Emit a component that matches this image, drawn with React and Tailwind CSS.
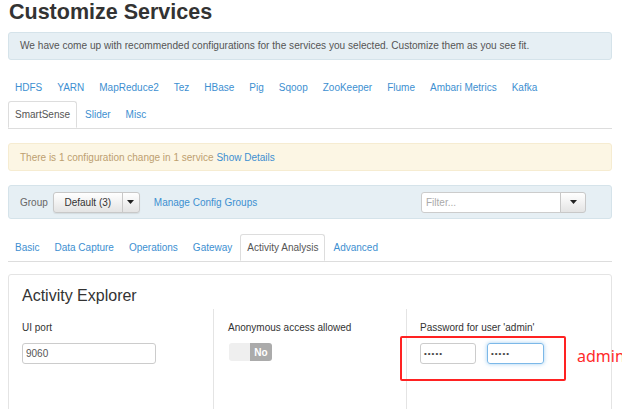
import React from 'react';

const services = ['HDFS', 'YARN', 'MapReduce2', 'Tez', 'HBase', 'Pig', 'Sqoop', 'ZooKeeper', 'Flume', 'Ambari Metrics', 'Kafka', 'SmartSense', 'Slider', 'Misc'];
const subTabs = ['Basic', 'Data Capture', 'Operations', 'Gateway', 'Activity Analysis', 'Advanced'];

const Caret = () => (
  <svg width="7" height="4" viewBox="0 0 7 4">
    <polygon points="0,0 7,0 3.5,4" fill="#222" />
  </svg>
);

const Tab = ({ label, active }) => (
  <div
    className={
      active
        ? 'h-[27px] px-[6px] mr-[1px] -mb-px flex items-center bg-white border border-[#ddd] border-b-white rounded-t-[3px] text-[#555]'
        : 'h-[27px] px-[6px] mr-[1px] flex items-center border border-transparent text-[#3d8fd1]'
    }
  >
    {label}
  </div>
);

const App = () => {
  return (
    <div className="w-[622px] h-[409px] overflow-hidden bg-white relative text-[10px] text-[#333]" style={{ fontFamily: '"Liberation Sans", Arial, sans-serif' }}>
      <div className="pl-[8px] pr-[10px]">
        {/* Title */}
        <h1 className="text-[21.5px] leading-[24px] font-bold text-[#333] pl-[1px]">Customize Services</h1>

        {/* Info alert */}
        <div className="mt-[8px] h-[28px] flex items-center px-[11px] bg-[#e6eff4] border border-[#d5e3ea] rounded-[3px] text-[#555] text-[10.1px]">
          We have come up with recommended configurations for the services you selected. Customize them as you see fit.
        </div>

        {/* Service tabs */}
        <div className="mt-[14px] flex flex-wrap border-b border-[#ddd]">
          {services.map((s) => (
            <Tab key={s} label={s} active={s === 'SmartSense'} />
          ))}
        </div>

        {/* Warning alert */}
        <div className="mt-[14px] h-[28px] flex items-center px-[11px] bg-[#fcf6e4] border border-[#f6ecd1] rounded-[3px] text-[#bd9f70]">
          <span>There is 1 configuration change in 1 service</span>
          <span className="ml-[3px] text-[#3d8fd1]">Show Details</span>
        </div>

        {/* Group bar */}
        <div className="mt-[14px] h-[34px] flex items-center px-[11px] bg-[#e6eff4] border border-[#d5e3ea] rounded-[3px]">
          <span className="text-[#666]">Group</span>
          <div className="ml-[5px] flex h-[21px] rounded-[3px] border border-[#c8c8c8] bg-gradient-to-b from-white to-[#e4e4e4] shadow-[0_1px_1px_rgba(0,0,0,0.08)]">
            <div className="w-[68px] flex items-center justify-center text-[#333]">Default (3)</div>
            <div className="w-[17px] border-l border-[#c8c8c8] flex items-center justify-center">
              <Caret />
            </div>
          </div>
          <span className="ml-[14px] text-[#3d8fd1]">Manage Config Groups</span>
          <div className="ml-auto mr-[14px] flex h-[21px]">
            <div className="w-[140px] bg-white border border-[#ccc] rounded-l-[3px] flex items-center pl-[4px] text-[#aaa]">Filter...</div>
            <div className="w-[26px] -ml-px border border-[#c8c8c8] rounded-r-[3px] bg-gradient-to-b from-white to-[#e4e4e4] flex items-center justify-center">
              <Caret />
            </div>
          </div>
        </div>

        {/* Sub tabs */}
        <div className="mt-[15px] flex border-b border-[#ddd]">
          {subTabs.map((s) => (
            <Tab key={s} label={s} active={s === 'Activity Analysis'} />
          ))}
        </div>

        {/* Panel */}
        <div className="mt-[12px] border border-[#e4e4e4] rounded-[3px] h-[200px]">
          <div className="pl-[13px] pt-[11px] text-[16px] leading-[20px] text-[#333]">Activity Explorer</div>
          <div className="mt-[3px] grid grid-cols-[204px_193px_1fr] h-[120px]">
            <div className="pl-[13px] pt-[12px]">
              <div className="leading-[14px]">UI port</div>
              <div className="mt-[8px] w-[134px] h-[21px] border border-[#ccc] rounded-[3px] flex items-center pl-[3px] text-[#555]">9060</div>
            </div>
            <div className="border-l border-[#e4e4e4] pl-[14px] pt-[12px]">
              <div className="leading-[14px]">Anonymous access allowed</div>
              <div className="mt-[8px] ml-[1px] flex h-[18px] w-[43px] rounded-[3px] overflow-hidden">
                <div className="w-[21px] bg-[#efefef]"></div>
                <div className="flex-1 bg-[#ababab] text-white font-bold flex items-center justify-center text-[10px]">No</div>
              </div>
            </div>
            <div className="border-l border-[#e4e4e4] pl-[13px] pt-[12px]">
              <div className="leading-[14px]">Password for user 'admin'</div>
              <div className="mt-[8px] flex gap-[11px]">
                <div className="w-[56px] h-[21px] border border-[#ccc] rounded-[3px] flex items-center pl-[3px] text-[8px] tracking-[1px] text-[#444]">•••••</div>
                <div className="w-[57px] h-[21px] border border-[#7cb8e8] rounded-[3px] shadow-[0_0_4px_rgba(102,175,233,0.6)] flex items-center pl-[3px] text-[8px] tracking-[1px] text-[#444]">•••••</div>
              </div>
            </div>
          </div>
        </div>
      </div>

      {/* Red annotation */}
      <div className="absolute left-[400px] top-[336px] w-[166px] h-[45px] border-2 border-[#ff2222] rounded-[2px]"></div>
      <div className="absolute left-[577px] top-[344px] text-[16px] leading-[24px] text-[#ff2a2a] whitespace-nowrap" style={{ fontFamily: '"Noto Sans", sans-serif' }}>admin</div>
    </div>
  );
};

export default App;
